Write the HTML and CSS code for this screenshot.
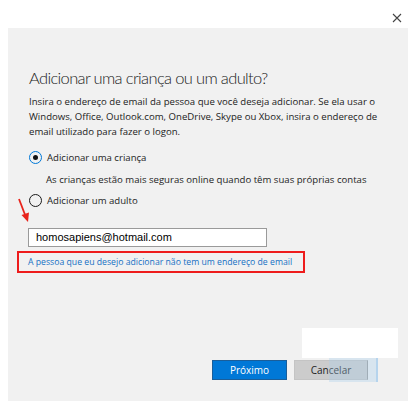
FILE: index.html
```html
<!DOCTYPE html>
<html lang="pt">
<head>
<meta charset="utf-8">
<link rel="stylesheet" href="styles.css">
</head>
<body>
<div class="topbar">
  <span class="close">
    <svg width="10" height="10" viewBox="0 0 10 10"><path d="M1 1L9 9M9 1L1 9" stroke="#444" stroke-width="1.1"/></svg>
  </span>
</div>
<div class="panel">
  <h1 class="title">Adicionar uma criança ou um adulto?</h1>
  <p class="intro">Insira o endereço de email da pessoa que você deseja adicionar. Se ela usar o Windows, Office, Outlook.com, OneDrive, Skype ou Xbox, insira o endereço de email utilizado para fazer o logon.</p>
  <div class="radio-row first">
    <span class="radio checked"><span class="dot"></span></span>
    <span>Adicionar uma criança</span>
  </div>
  <div class="hint">As crianças estão mais seguras online quando têm suas próprias contas</div>
  <div class="radio-row second">
    <span class="radio"></span>
    <span>Adicionar um adulto</span>
    <svg class="arrow" width="14" height="26" viewBox="0 0 14 26"><path d="M2 1L8.5 18" stroke="#e8231b" stroke-width="1.8"/><path d="M4.5 17L12 14.5L11 24Z" fill="#e8231b"/></svg>
  </div>
  <div class="email">homosapiens@hotmail.com</div>
  <div class="linkbox"><a class="link">A pessoa que eu desejo adicionar não tem um endereço de email</a></div>
  <div class="spacer"></div>
  <div class="buttons">
    <span class="btn primary">Próximo</span>
    <span class="btn secondary">Cancelar</span>
    <span class="ghost-white"></span>
    <span class="ghost-blue"></span>
  </div>
</div>
</body>
</html>
```
FILE: styles.css
```css
html, body {
  margin: 0;
  padding: 0;
  background: #ffffff;
}
body {
  width: 420px;
  height: 409px;
  font-family: "Open Sans", "Noto Sans", sans-serif;
  color: #1e1e1e;
  overflow: hidden;
}
.topbar {
  height: 28px;
  display: flex;
  justify-content: flex-end;
  align-items: flex-start;
  padding-right: 18px;
}
.close {
  margin-top: 13px;
  width: 10px;
  height: 10px;
  display: block;
}
.close svg { display: block; }
.panel {
  margin-left: 8px;
  width: 400px;
  height: 373px;
  background: #f1f1f1;
  box-sizing: border-box;
  padding: 37px 0 0 21px;
  display: flex;
  flex-direction: column;
}
.title {
  margin: 0;
  font-family: Lato, "Open Sans", sans-serif;
  font-weight: 300;
  font-size: 16.5px;
  letter-spacing: -0.65px;
  line-height: 26px;
  color: #222;
}
.intro {
  margin: 3px 0 0 0;
  width: 360px;
  font-size: 9.6px;
  line-height: 15px;
  color: #222;
}
.radio-row {
  display: flex;
  align-items: center;
  height: 15px;
  font-size: 9.6px;
  gap: 5px;
  position: relative;
}
.radio-row.first { margin-top: 11px; }
.radio-row.second { margin-top: 6px; }
.radio {
  width: 13px;
  height: 13px;
  box-sizing: border-box;
  border: 1.5px solid #1a1a1a;
  border-radius: 50%;
  display: flex;
  align-items: center;
  justify-content: center;
}
.radio.checked { border-color: #0078d7; }
.dot {
  width: 5px;
  height: 5px;
  border-radius: 50%;
  background: #111;
}
.hint {
  margin: 7px 0 0 17px;
  height: 15px;
  line-height: 15px;
  font-size: 9.6px;
}
.arrow {
  position: absolute;
  left: -12px;
  top: 5px;
}
.email {
  margin-top: 20px;
  margin-left: -1px;
  width: 239px;
  height: 19px;
  box-sizing: border-box;
  border: 1px solid #9a9a9a;
  background: #fff;
  font-family: "Liberation Sans", Arial, sans-serif;
  font-size: 11px;
  line-height: 17px;
  padding-left: 7px;
  color: #000;
}
.linkbox {
  margin-top: 4px;
  margin-left: -12px;
  width: 288px;
  height: 22px;
  box-sizing: border-box;
  border: 2px solid #ee1c1c;
  padding-left: 9px;
  display: flex;
  align-items: center;
}
.link {
  font-size: 8.7px;
  color: #1570c4;
  white-space: nowrap;
}
.spacer { height: 87px; }
.buttons {
  display: flex;
  gap: 7px;
  padding-left: 183px;
  position: relative;
}
.btn {
  width: 75px;
  height: 20px;
  box-sizing: border-box;
  display: flex;
  align-items: center;
  justify-content: center;
  font-size: 10px;
}
.btn.primary {
  background: #0078d7;
  border: 1px solid #1a5e9a;
  color: #fff;
}
.btn.secondary {
  width: 74px;
  background: #cccccc;
  border: 1px solid #c4c4c4;
  border-right-color: #9c9c9c;
  color: #222;
}
.ghost-white {
  position: absolute;
  left: 273px;
  top: -32px;
  width: 96px;
  height: 30px;
  background: #fff;
}
.ghost-blue {
  position: absolute;
  left: 300px;
  top: -2px;
  width: 47px;
  height: 24px;
  background: rgba(170, 205, 235, 0.35);
  border-right: 2px solid rgba(160, 200, 235, 0.6);
}
```
